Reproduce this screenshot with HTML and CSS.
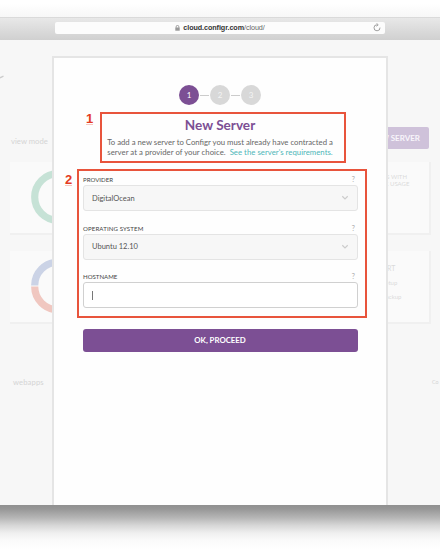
FILE: index.html
```html
<!DOCTYPE html>
<html lang="en">
<head>
<meta charset="utf-8">
<title>New Server</title>
<link rel="stylesheet" href="styles.css">
</head>
<body>
<div class="desktop-top"></div>
<header class="toolbar">
  <div class="address">
    <span class="url"><svg class="lock" viewBox="0 0 5 6"><path d="M1.2 2.8V1.7a1.3 1.3 0 0 1 2.6 0v1.1" fill="none" stroke="#888" stroke-width=".8"/><rect x=".3" y="2.5" width="4.4" height="3.2" fill="#999"/></svg><b>cloud.configr.com</b>/cloud/</span>
    <svg class="reload" viewBox="0 0 8 9"><path d="M4.2 1.8A3 3 0 1 0 7 4.6M3.5.3l1.7 1.5-1.7 1.5" fill="none" stroke="#888" stroke-width=".8"/></svg>
  </div>
</header>
<main class="page">
  <svg class="caret" viewBox="0 0 5 4"><path d="M0 2.8 3.5 1.2" stroke="#ccc" stroke-width="1.3"/></svg>
  <div class="dashboard">
    <div class="bar"><span class="view">view mode</span><span class="add">NEW SERVER</span></div>
    <section class="card">
      <svg class="donut" viewBox="0 0 54 54"><circle cx="27" cy="27" r="23.3" fill="none" stroke="#c6e2d6" stroke-width="7.2"/></svg>
      <div class="info usage">APPS WITH<br>DISK USAGE</div>
    </section>
    <section class="card">
      <svg class="donut" viewBox="0 0 54 54"><path d="M3.7 26.5a23.3 23.3 0 0 1 46.6 0" fill="none" stroke="#cbd3e6" stroke-width="7.2"/><path d="M3.7 27.5a23.3 23.3 0 0 0 46.6 0" fill="none" stroke="#f0c7c0" stroke-width="7.2"/></svg>
      <div class="info support"><strong>SUPPORT</strong><span>Setup</span><span>Backup</span></div>
    </section>
    <div class="bottom"><span>webapps</span><span>Co</span></div>
  </div>
  <section class="modal">
    <div class="steps"><span class="step active">1</span><i></i><span class="step">2</span><i></i><span class="step">3</span></div>
    <div class="mark intro">
      <span class="number">1</span>
      <h1>New Server</h1>
      <p>To add a new server to Configr you must already have contracted a<br><span class="l2">server at a provider of your choice.&nbsp; <a>See the server's requirements.</a></span></p>
    </div>
    <div class="mark form">
      <span class="number">2</span>
      <div class="field">
        <div class="label"><span>PROVIDER</span><span class="help">?</span></div>
        <div class="select">DigitalOcean<svg viewBox="0 0 8 6"><path d="m1.3 1.3 2.7 2.6 2.7-2.6" fill="none" stroke="#ccc" stroke-width="1.2"/></svg></div>
      </div>
      <div class="field">
        <div class="label"><span class="os">OPERATING SYSTEM</span><span class="help">?</span></div>
        <div class="select">Ubuntu 12.10<svg viewBox="0 0 8 6"><path d="m1.3 1.3 2.7 2.6 2.7-2.6" fill="none" stroke="#ccc" stroke-width="1.2"/></svg></div>
      </div>
      <div class="field">
        <div class="label"><span>HOSTNAME</span><span class="help">?</span></div>
        <div class="select input"><i class="cursor"></i></div>
      </div>
    </div>
    <div class="proceed">OK, PROCEED</div>
  </section>
</main>
<div class="shadow"></div>
</body>
</html>
```
FILE: styles.css
```css
* { box-sizing: border-box; }
body { margin: 0; width: 440px; height: 550px; overflow: hidden; background: #fff; font-family: Lato, "Open Sans", sans-serif; }
.desktop-top { height: 17px; background: linear-gradient(#fff 20%, #f7f7f7); }
.toolbar { height: 23px; padding-top: 4px; border-top: 1px solid #dadada; background: linear-gradient(#e8e8e8, #d0d0d0); }
.address { display: flex; align-items: center; justify-content: center; position: relative; width: 330px; height: 12px; margin: 0 auto; border-radius: 2px; background: #fcfcfc; }
.url { display: flex; align-items: center; font: 7.2px/14px "Liberation Sans", sans-serif; color: #666; letter-spacing: -.07px; }
.url b { color: #333; }
.lock { width: 5px; height: 6px; margin-right: 3px; }
.reload { position: absolute; right: 4px; top: 1px; width: 8px; height: 9px; }
.page { position: relative; height: 465px; overflow: hidden; background: #f7f7f7; }
.caret { position: absolute; left: 0; top: 35px; width: 5px; height: 4px; }
.dashboard { width: 421px; margin-left: 10px; padding-top: 87px; color: #d4d4d4; }
.bar { display: flex; justify-content: space-between; height: 22px; margin-bottom: 13px; padding-right: 2px; }
.view { padding: 8px 0 0 1px; font-size: 7.7px; line-height: 12px; letter-spacing: .02px; }
.add { width: 75px; height: 22px; padding-right: 9px; border-radius: 2px; background: #cfc2da; color: #f8f5fa; font-size: 8px; font-weight: 700; line-height: 22px; text-align: right; }
.card { display: flex; justify-content: space-between; height: 73px; margin-bottom: 16px; padding: 8px 0 0 21px; border-right: 2px solid #f0f0f0; border-bottom: 2px solid #f0f0f0; background: #fafafa; }
.donut { width: 54px; height: 54px; }
.info { width: 56px; font-size: 6px; line-height: 7px; color: #dadada; }
.usage { padding-top: 3px; width: 56px; padding-left: 2px; white-space: nowrap; }
.support { display: flex; flex-direction: column; gap: 7px; padding-top: 6px; }
.support strong { font-size: 7px; font-weight: 400; margin-left: -9px; }
.support span { padding-left: 9px; }
.bottom { display: flex; justify-content: space-between; width: 430px; padding: 36px 0 0 3px; font-size: 7.6px; line-height: 12px; letter-spacing: .15px; }
.bottom span:last-child { width: 8px; font-size: 5.4px; letter-spacing: 0; }
.modal { position: absolute; left: 52px; top: 16px; width: 336px; height: 460px; padding: 27px 23px 0; border: 2px solid #e5e5e5; background: #fefefe; }
.steps { display: flex; justify-content: center; align-items: center; gap: 1px; height: 20px; }
.steps i { width: 9px; height: 1px; background: #ccc; }
.step { width: 20px; height: 20px; border-radius: 50%; background: #d8d8d8; color: #f4f4f4; font-size: 8px; line-height: 20px; text-align: center; }
.step.active { background: #7c4f94; color: #fff; }
.mark { position: relative; border: 2px solid #e8543c; }
.number { position: absolute; font: bold 13px/13px "Liberation Sans", sans-serif; color: #e43b22; border-bottom: 1px solid #f6c6be; height: 13px; }
.intro { width: 246px; height: 51px; margin: 7px 0 0 23px; padding-right: 6px; text-align: center; }
.intro .number { left: -16px; top: -2px; }
h1 { margin: 2px 0 0; font-size: 13.6px; line-height: 18px; color: #7c4f94; }
.intro p { margin: 4px 0 0; font-size: 7.75px; line-height: 9.6px; color: #666; white-space: nowrap; }
.l2 { letter-spacing: .03px; }
.intro a { color: #4db6b8; }
.form { width: 290px; height: 149px; margin: 6px 0 0; padding: 2px 7px 0 4px; }
.form .number { left: -14px; top: 2px; }
.field { height: 48.5px; }
.label { display: flex; justify-content: space-between; height: 12px; font-size: 6.1px; line-height: 13px; color: #444; }
.os { letter-spacing: .12px; }
.help { padding-right: 3px; font-size: 7px; color: #aaa; }
.select { display: flex; align-items: center; justify-content: space-between; height: 26px; padding: 0 8px; border: 1px solid #e4e4e4; border-radius: 3px; background: #f7f7f7; color: #555; font-size: 7.5px; }
.select svg { width: 8px; height: 6px; }
.input { border-color: #d0d0d0; background: #fff; }
.cursor { width: 1px; height: 9px; background: #777; }
.proceed { width: 275px; height: 23px; margin: 11px 0 0 5.5px; border-radius: 3px; background: #7c4f94; color: #fff; font-size: 7.8px; font-weight: 700; line-height: 23px; text-align: center; }
.shadow { height: 45px; background: linear-gradient(#909090 0, #979797 9%, #b5b5b5 28%, #d6d6d6 45%, #efefef 62%, #fafafa 78%, #fff 100%); }
```
